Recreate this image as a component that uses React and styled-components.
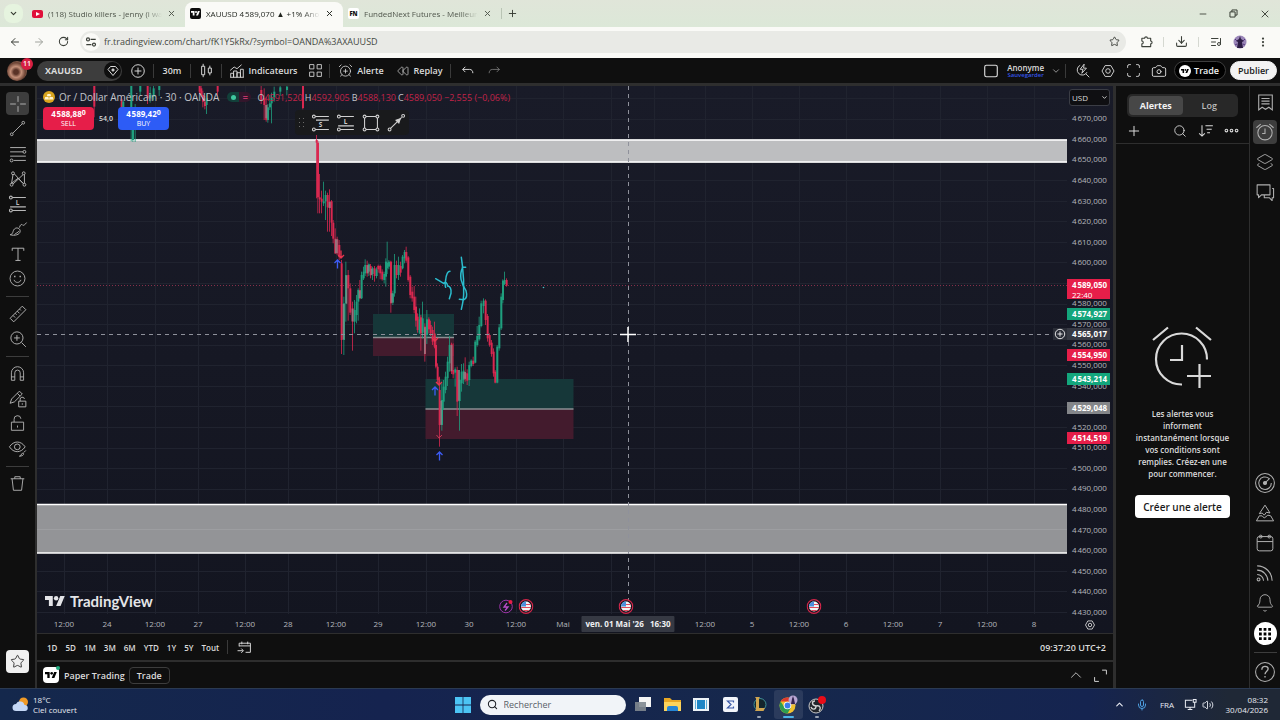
import React from 'react'
import styled, { createGlobalStyle, css } from 'styled-components'
import {
  AlarmClockPlus,
  ArrowLeft,
  ArrowRight,
  Bell,
  Camera,
  ChevronDown,
  ChevronUp,
  Download,
  EllipsisVertical,
  Layers2,
  ListMusic,
  Mic,
  Minus,
  Plus,
  Rewind,
  RotateCw,
  Search,
  Star,
  Volume2,
  X,
} from 'lucide-react'

/* ---------- data ---------- */

const PRICE_TOP = 4670
const PRICES = Array.from({ length: 25 }, (_, i) => PRICE_TOP - i * 10)
// the axis runs from half a step above the first price to half a step below the last
const priceToPercent = price => ((PRICE_TOP + 5 - price) / 250) * 100

const TIMES = [
  [64, '12:00'], [107, '24'], [155, '12:00'], [198, '27'], [245, '12:00'], [288, '28'],
  [336, '12:00'], [378, '29'], [426, '12:00'], [469, '30'], [516, '12:00'], [563, 'Mai'],
  [611, ''], [654, ''], [705, '12:00'], [752, '5'], [799, '12:00'], [846, '6'],
  [893, '12:00'], [940, '7'], [987, '12:00'], [1034, '8'],
]
const PLOT_X = 37
const PLOT_W = 1030
const timeToPercent = x => ((x - PLOT_X) / PLOT_W) * 100

const PRICE_TAGS = [
  { price: 4574.927, label: '4\u200A574,927', color: '#13a67c' },
  { price: 4554.95, label: '4\u200A554,950', color: '#e61e49' },
  { price: 4543.214, label: '4\u200A543,214', color: '#13a67c' },
  { price: 4529.048, label: '4\u200A529,048', color: '#84868a' },
  { price: 4514.519, label: '4\u200A514,519', color: '#e61e49' },
]

// x, open, close, high, low (y grows downwards)
const CANDLES = [
  [-536, -392, -365, -400, -350], [-531, -365, -385, -390, -352], [-618, -432, -370, -435, -338],
  [-507, -300, -432, -435, -266], [-502, -270, -335, -350, -264], [-495, -335, -365, -378, -264],
  [-480, -415, -432, -435, -403], [-458, -433, -395, -435, -378], [-450, -395, -410, -430, -382],
  [-440, -400, -425, -434, -388], [-423, -420, -433, -435, -402], [-302, -433, -415, -435, -408],
  [-297, -425, -405, -433, -398], [-292, -405, -385, -418, -368], [-286, -385, -372, -402, -362],
  [-281, -375, -395, -410, -348], [-248, -434, -415, -434, -402], [-117, -420, -390, -432, -378],
  [-108, -395, -375, -425, -330], [-102, -375, -330, -400, -325], [-97, -330, -368, -378, -322],
  [-91, -368, -380, -405, -360], [-86, -380, -398, -412, -320], [-78, -398, -415, -430, -385],
  [-60, -415, -428, -434, -402], [-40, -420, -430, -434, -404], [8, -432, -366, -435, -362],
  [49, -270, -262, -290, -95], [53, -262, -98, -268, -50], [58, -98, -92, -168, -50],
  [64, -94, -85, -118, -50], [70, -80, -86, -145, -72], [76, -86, -105, -118, -30],
  [82, -105, -68, -112, 5], [88, -86, -66, -122, 5], [94, -86, -22, -90, 18],
  [99, -22, 26, -30, 40], [105, 26, 70, -5, 72], [111, 28, 70, 20, 75], [117, 45, 80, 30, 90],
  [124, 100, 330, 90, 372], [131, 330, 220, 200, 375], [137, 220, 135, 95, 275],
  [144, 135, 175, 120, 272], [150, 175, 248, 160, 255], [157, 235, 275, 215, 362],
  [163, 275, 240, 210, 310], [169, 255, 215, 195, 280], [174, 215, 180, 175, 272],
  [179, 180, 205, 150, 208], [184, 205, 135, 125, 207], [190, 145, 125, 110, 150],
  [195, 130, 105, 88, 138], [201, 105, 130, 92, 140], [206, 125, 103, 100, 138],
  [211, 108, 135, 102, 145], [217, 132, 115, 110, 150], [223, 115, 138, 108, 155],
  [229, 138, 118, 112, 145], [234, 108, 118, 104, 128], [240, 108, 130, 104, 148],
  [246, 125, 148, 118, 152], [252, 150, 132, 125, 160], [257, 140, 95, 85, 170],
  [261, 115, 98, 35, 132], [266, 110, 95, 90, 118], [272, 95, 220, 92, 248],
  [278, 218, 190, 182, 225], [283, 190, 105, 72, 200], [289, 105, 135, 92, 145],
  [295, 135, 105, 80, 150], [301, 108, 128, 95, 140], [307, 115, 80, 75, 118],
  [313, 85, 66, 60, 100], [318, 66, 92, 50, 98], [324, 82, 150, 78, 155],
  [330, 140, 195, 135, 205], [336, 185, 205, 170, 215], [342, 200, 240, 168, 250],
  [347, 230, 272, 200, 290], [352, 260, 300, 250, 308], [358, 308, 268, 235, 312],
  [362, 262, 310, 255, 362], [367, 308, 265, 215, 325], [374, 290, 372, 280, 395],
  [380, 315, 268, 240, 342], [386, 268, 298, 262, 310], [391, 285, 310, 272, 318],
  [397, 300, 335, 290, 345], [403, 320, 350, 275, 355], [407, 345, 410, 330, 415],
  [412, 410, 450, 400, 460], [418, 480, 585, 440, 650], [425, 585, 510, 460, 602],
  [430, 515, 470, 450, 540], [436, 480, 440, 425, 490], [442, 445, 395, 380, 468],
  [448, 400, 345, 318, 425], [454, 343, 425, 338, 432], [459, 420, 433, 340, 445],
  [465, 428, 418, 412, 470], [471, 420, 515, 410, 558], [478, 513, 450, 420, 602],
  [484, 460, 425, 402, 485], [490, 450, 422, 400, 462], [495, 428, 448, 382, 455],
  [501, 430, 452, 418, 465], [507, 450, 405, 395, 468], [513, 408, 392, 388, 412],
  [519, 392, 402, 380, 408], [525, 398, 335, 330, 400], [531, 345, 318, 288, 350],
  [537, 328, 285, 260, 332], [543, 288, 220, 212, 292], [550, 228, 212, 205, 250],
  [556, 212, 270, 208, 285], [562, 258, 325, 252, 335], [568, 315, 345, 310, 350],
  [574, 338, 372, 330, 380], [580, 365, 430, 355, 440], [585, 425, 458, 420, 460],
  [591, 458, 350, 345, 460], [597, 355, 292, 282, 362], [603, 295, 200, 190, 300],
  [608, 210, 152, 148, 220], [613, 162, 150, 125, 165], [619, 150, 167, 145, 170],
]

const RANGES = ['1D', '5D', '1M', '3M', '6M', 'YTD', '1Y', '5Y', 'Tout']

/* ---------- shared ---------- */

const GlobalStyle = createGlobalStyle`
  * { box-sizing: border-box; }
  body {
    margin: 0;
    background: #0f0f0f;
    font-family: 'Open Sans', 'Noto Sans', sans-serif;
    font-size: 9px;
    color: #dbdbdb;
  }
  button, input, select { font: inherit; color: inherit; }
  button { border: 0; padding: 0; background: none; }
  svg { display: block; flex: none; }
`

const center = css`
  display: flex;
  align-items: center;
  justify-content: center;
`

const IconButton = styled.button`
  ${center}
  flex: none;
  width: ${p => p.$w || 24}px;
  height: ${p => p.$h || 24}px;
  border-radius: 4px;
  background: ${p => (p.$active ? '#3d3d3d' : 'transparent')};
`

const Line = ({ size = 18, w = 1.3, children }) => (
  <svg
    width={size}
    height={size}
    viewBox="0 0 28 28"
    fill="none"
    stroke="currentColor"
    strokeWidth={w}
    aria-hidden="true"
  >
    {children}
  </svg>
)

const TvMark = ({ width }) => (
  <svg width={width} height={width / 2} viewBox="0 0 36 18" fill="currentColor" aria-hidden="true">
    <path d="M14 18H7V7H0V0h14v18zM28 18h-8L27.5 0h8L28 18z" />
    <circle cx="20" cy="4" r="4" />
  </svg>
)

/* ---------- page ---------- */

const Page = styled.div`
  display: flex;
  flex-direction: column;
  min-height: 100vh;
`

const TabStrip = styled.div`
  display: flex;
  align-items: center;
  height: 27px;
  padding-left: 4px;
  background: linear-gradient(#e0e5d9, #dce8d8);
  color: #33382f;
`

const TabMenu = styled(IconButton)`
  border-radius: 8px;
  background: #e6f4df;
  margin-right: 4px;
`

const Tab = styled.div`
  display: flex;
  align-items: center;
  gap: 5px;
  width: 158px;
  height: 27px;
  padding: 0 9px 0 5px;
  margin-top: ${p => (p.$active ? '4px' : 0)};
  padding-bottom: ${p => (p.$active ? '4px' : 0)};
  border-radius: 8px 8px 0 0;
  background: ${p => (p.$active ? '#fafaf7' : 'transparent')};
  color: ${p => (p.$active ? '#1f231d' : '#50564c')};
`

const TabTitle = styled.span`
  flex: 1;
  overflow: hidden;
  font-size: 8px;
  font-weight: 500;
  white-space: nowrap;
  mask-image: linear-gradient(to right, #000 85%, transparent);
`

const Favicon = styled.span`
  ${center}
  flex: none;
  width: 11px;
  height: ${p => p.$h || 11}px;
  border-radius: 2px;
  background: ${p => p.$bg};
  color: ${p => p.$color || '#fff'};
  font-size: 6px;
  font-weight: 800;
`

const Divider = styled.span`
  flex: none;
  width: 1px;
  height: ${p => p.$h || 14}px;
  margin: 0 ${p => p.$gap || 0}px;
  background: ${p => p.$color || '#3a3a3a'};
`

const Push = styled.span`
  flex: 1;
`

const AddressRow = styled.div`
  display: flex;
  align-items: center;
  height: 31px;
  padding: 0 6px 2px 3px;
  background: #fafaf7;
  color: #3c403a;
`

const AddressBox = styled.label`
  flex: 1;
  display: flex;
  align-items: center;
  gap: 4px;
  height: 22px;
  margin: 0 8px 0 5px;
  padding: 0 6px 0 2px;
  border-radius: 11px;
  background: #e9eae6;
`

const SiteInfo = styled.span`
  ${center}
  width: 18px;
  height: 18px;
  border-radius: 9px;
  background: #fafaf7;
`

const AddressInput = styled.input`
  flex: 1;
  min-width: 0;
  padding: 0;
  border: 0;
  outline: 0;
  background: none;
  color: #454943;
`

const TopBar = styled.header`
  display: flex;
  align-items: center;
  height: 25px;
  padding: 0 3px 0 7px;
  background: #0f0f0f;
  font-weight: 600;
`

const Avatar = styled.div`
  position: relative;
  width: 20px;
  height: 20px;
  margin-right: 10px;
  border-radius: 50%;
  background: radial-gradient(circle at 45% 55%, #5a3327 15%, #c49079 35%, #6b4334 60%, #d8b09a);
`

const AvatarCount = styled.span`
  ${center}
  position: absolute;
  top: -3px;
  right: -6px;
  width: 12px;
  height: 12px;
  border-radius: 6px;
  background: #d61f42;
  color: #fff;
  font-size: 7px;
`

const SymbolButton = styled.button`
  display: flex;
  align-items: center;
  justify-content: space-between;
  width: 85px;
  height: 20px;
  padding: 0 1px 0 8px;
  border-radius: 10px;
  background: #3d3d3d;
  font-weight: 700;
`

const SymbolBadge = styled.span`
  ${center}
  width: 17px;
  height: 17px;
  border-radius: 9px;
  background: #0f0f0f;
`

const TextButton = styled.button`
  ${center}
  gap: 4px;
  height: 22px;
  width: ${p => p.$w}px;
  font-weight: 600;
`

const LayoutName = styled.button`
  display: flex;
  flex-direction: column;
  align-items: center;
  margin: 0 7px 0 8px;
  font-size: 8px;
  line-height: 9px;
  font-weight: 600;
`

const SaveHint = styled.span`
  color: #3555e8;
  font-size: 6px;
  line-height: 7px;
`

const Pill = styled.button`
  ${center}
  gap: 3px;
  height: 19px;
  padding: 0 6px 0 4px;
  margin-left: 3px;
  border: 1px solid #3d3d3d;
  border-radius: 10px;
  background: #000;
  color: #f2f2f2;
  font-weight: 600;
  ${p => p.$light && css`
    padding: 0 7px;
    margin-left: 4px;
    border-color: #f2f2f2;
    background: #f2f2f2;
    color: #191919;
  `}
`

const PillMark = styled.span`
  ${center}
  width: 12px;
  height: 12px;
  border-radius: 6px;
  background: #fff;
  color: #000;
`

const Workspace = styled.main`
  flex: 1;
  display: flex;
  gap: 2px;
  padding-top: 3px;
  background: #2e2e2e;
`

const DrawBar = styled.nav`
  display: flex;
  flex-direction: column;
  align-items: center;
  width: 35px;
  padding: 5px 0 14px;
  background: #0f0f0f;
  color: #b8b8b8;
`

const DrawButton = styled(IconButton)`
  width: 23px;
  height: 23px;
  margin: 1px 0;
  ${p => p.$light && css`
    background: #f0f0f0;
    color: #1a1a1a;
  `}
`

const BarRule = styled.hr`
  width: 23px;
  height: 1px;
  margin: ${p => p.$gap || 5}px 0 4px;
  border: 0;
  background: #3d3d3d;
`

const Middle = styled.section`
  flex: 1;
  min-width: 0;
  display: flex;
  flex-direction: column;
  gap: 2px;
`

const ChartPanel = styled.div`
  flex: 1;
  display: flex;
  flex-direction: column;
`

const ChartGrid = styled.div`
  flex: 1;
  display: grid;
  grid-template-columns: 1fr 46px;
  background: linear-gradient(#191b28, #131520);
`

const PlotColumn = styled.div`
  display: flex;
  flex-direction: column;
  min-width: 0;
`

const Plot = styled.div`
  position: relative;
  flex: 1;
  display: flex;
  flex-direction: column;
  padding: 4px 5px;
  overflow: hidden;
`

const PlotSvg = styled.svg`
  position: absolute;
  inset: 0;
  width: 100%;
  height: 100%;
`

const Legend = styled.div`
  position: relative;
  display: flex;
  align-items: center;
  height: 14px;
  white-space: nowrap;
  color: #c3c5cb;
`

const LegendTitle = styled.span`
  margin: 0 8px 0 3px;
  font-size: 10px;
`

const StatusPills = styled.span`
  display: flex;
  margin-right: 6px;
  border-radius: 5px;
  overflow: hidden;
`

const StatusPill = styled.span`
  ${center}
  width: 12px;
  height: 10px;
  background: ${p => p.$bg};
  color: ${p => p.$color};
  font-weight: 700;
`

const Dot = styled.span`
  width: 5px;
  height: 5px;
  border-radius: 50%;
  background: currentColor;
`

const Ohlc = styled.span`
  margin-right: 2px;
  color: #c22348;

  b {
    color: #c3c5cb;
    font-weight: 400;
  }
`

const Deals = styled.div`
  position: relative;
  display: flex;
  align-items: center;
  margin: 3px 0 0 1px;
`

const DealButton = styled.button`
  display: flex;
  flex-direction: column;
  align-items: center;
  width: 51px;
  height: 23px;
  padding-top: 2px;
  border-radius: 4px;
  background: ${p => p.$bg};
  color: #fff;
  font-size: 7px;
  line-height: 9px;

  b {
    font-size: 8px;
    line-height: 10px;
  }
  sup {
    font-size: 7px;
    line-height: 1px;
    vertical-align: 2px;
  }
`

const Spread = styled.span`
  width: 24px;
  text-align: center;
  font-size: 7px;
  font-weight: 600;
`

const Favorites = styled.div`
  position: absolute;
  left: 25%;
  top: 24px;
  display: flex;
  align-items: center;
  height: 25px;
  border-radius: 4px;
  background: #191a1c;
  color: #d0d0d0;
`

const Watermark = styled.div`
  position: relative;
  display: flex;
  align-items: center;
  gap: 5px;
  margin: auto 0 0 3px;
  color: #e4e5e8;
  font-family: Lato, 'Open Sans', sans-serif;
  font-size: 15px;
  line-height: 18px;
  font-weight: 700;
`

const EventMark = styled.span`
  position: absolute;
  bottom: 0;
  left: ${p => p.$left}%;
  transform: translateX(-50%);
`

const TimeAxis = styled.div`
  position: relative;
  height: 19px;
  font-size: 8px;
  line-height: 20px;
  color: #b4b6bd;
`

const TimeLabel = styled.span`
  position: absolute;
  transform: translateX(-50%);
`

const CrossTime = styled.span`
  position: absolute;
  top: 2px;
  transform: translateX(-50%);
  padding: 0 4px;
  border-radius: 1px;
  background: #363943;
  color: #f0f0f2;
  font-weight: 700;
  line-height: 16px;
  white-space: pre;
`

const PriceAxis = styled.div`
  display: flex;
  flex-direction: column;
`

const CurrencyBox = styled.div`
  position: relative;
  width: 41px;
  height: 17px;
  margin: 3px 0 2px 2px;

  select {
    width: 100%;
    height: 100%;
    padding: 0 2px;
    border: 1px solid #3b3d45;
    border-radius: 3px;
    background: #0f0f12;
    font-size: 8px;
    appearance: none;
  }
  svg {
    position: absolute;
    right: 2px;
    top: 5px;
    pointer-events: none;
  }
`

const PriceScale = styled.div`
  position: relative;
  flex: 1;
  display: flex;
  flex-direction: column;
  font-size: 8px;
  line-height: 12px;
  color: #b4b6bd;
`

const PriceLabel = styled.span`
  flex: 1;
  display: flex;
  align-items: center;
  padding-left: 5px;
`

const PriceTag = styled.span`
  position: absolute;
  left: 0;
  width: 43px;
  padding-left: 5px;
  transform: translateY(-6px);
  background: ${p => p.$bg};
  color: #fff;
  font-weight: 700;
  line-height: 12px;
`

const Countdown = styled.span`
  display: block;
  font-weight: 400;
  line-height: 8px;
`

const CrossPlus = styled.span`
  ${center}
  position: absolute;
  right: 100%;
  top: 0;
  width: 14px;
  height: 12px;
  background: #2a2d37;
`

const AxisSettings = styled(IconButton)`
  width: 46px;
  height: 11px;
  padding-bottom: 5px;
`

const Strip = styled.div`
  display: flex;
  align-items: center;
  height: 26px;
  padding: 0 1px 0 6px;
  background: #0f0f0f;
  font-weight: 600;
`

const RangeStrip = styled(Strip)`
  height: 27px;
  padding-right: 7px;
  border-top: 1px solid #2e2e2e;
  font-size: 8px;
`

const RangeButton = styled.button`
  padding: 0 4px;
  font-weight: 600;
`

const Clock = styled.span`
  font-size: 9px;
`

const BrokerMark = styled.span`
  ${center}
  position: relative;
  width: 16px;
  height: 16px;
  margin-right: 5px;
  border-radius: 4px;
  background: #fff;
  color: #000;
`

const OnlineDot = styled.span`
  position: absolute;
  top: -1px;
  right: -1px;
  width: 4px;
  height: 4px;
  border-radius: 50%;
  background: #22ab7f;
`

const OutlineButton = styled.button`
  height: 17px;
  padding: 0 7px;
  margin-left: 4px;
  border: 1px solid #3d3d3d;
  border-radius: 4px;
  font-weight: 600;
`

const AlertsPanel = styled.aside`
  display: flex;
  flex-direction: column;
  width: 134px;
  margin-left: 1px;
  border-right: 1px solid #2e2e2e;
  background: #0f0f0f;
`

const Segments = styled.div`
  display: flex;
  height: 23px;
  margin: 8px 11px 2px;
  padding: 2px;
  border-radius: 5px;
  background: #282828;
`

const Segment = styled.button`
  flex: 1;
  border-radius: 4px;
  background: ${p => (p.$active ? '#474747' : 'transparent')};
  color: ${p => (p.$active ? '#f2f2f2' : '#bdbdbd')};
  font-weight: ${p => (p.$active ? 700 : 600)};
`

const AlertTools = styled.div`
  display: flex;
  align-items: center;
  height: 25px;
  padding: 0 6px 1px;
  border-bottom: 1px solid #2e2e2e;
`

const EmptyState = styled.div`
  flex: 1;
  ${center}
  flex-direction: column;
  padding: 12px 16px 0;
  text-align: center;
`

const EmptyText = styled.p`
  margin: 20px 0 15px;
  font-size: 8px;
  font-weight: 600;
  line-height: 12px;
`

const CreateButton = styled.button`
  height: 23px;
  padding: 0 8px;
  border-radius: 4px;
  background: #fff;
  color: #1a1a1a;
  font-size: 10px;
  font-weight: 600;
  white-space: nowrap;
`

const WidgetBar = styled.nav`
  display: flex;
  flex-direction: column;
  align-items: center;
  width: 30px;
  margin-left: -2px;
  padding: 1px 0;
  background: #0f0f0f;
  color: #b0b0b0;
`

const WidgetButton = styled(IconButton)`
  margin: 3px 0;
`

const AppsButton = styled(IconButton)`
  width: 23px;
  height: 23px;
  margin: 4px 0;
  border-radius: 12px;
  background: #fff;
  color: #000;
`

const TaskBar = styled.footer`
  display: grid;
  grid-template-columns: 1fr auto 1fr;
  align-items: center;
  height: 32px;
  padding: 0 12px;
  border-top: 1px solid #2b3a52;
  background: linear-gradient(90deg, #14284c, #15234f 30%, #16284c 60%, #152450 85%, #1f2836 96%);
  color: #e8ebf2;
  font-size: 8px;
`

const Weather = styled.div`
  display: flex;
  align-items: center;
  gap: 4px;
  line-height: 10px;
`

const Apps = styled.div`
  display: flex;
  align-items: center;
`

const AppButton = styled.button`
  position: relative;
  ${center}
  width: 29px;
  height: 29px;
  border-radius: 3px;
  background: ${p => (p.$active ? 'rgba(255, 255, 255, 0.09)' : 'none')};

  &::after {
    content: '';
    position: absolute;
    bottom: 1px;
    width: ${p => (p.$active ? 11 : 4)}px;
    height: 2px;
    border-radius: 1px;
    background: ${p => (p.$active ? '#4cb4e8' : '#9aa3b2')};
    display: ${p => (p.$running ? 'block' : 'none')};
  }
`

const TaskSearch = styled.label`
  display: flex;
  align-items: center;
  gap: 6px;
  width: 146px;
  height: 20px;
  margin: 0 3px 0 2px;
  padding: 0 7px;
  border-radius: 10px;
  background: #f1f4f8;
  color: #1d2026;

  input {
    width: 100px;
    padding: 0;
    border: 0;
    outline: 0;
    background: none;
    font-size: 9px;
  }
  input::placeholder {
    color: #5a5f68;
    opacity: 1;
  }
`

const Tray = styled.div`
  display: flex;
  align-items: center;
  justify-content: flex-end;
`

const TrayClock = styled.div`
  margin-left: 10px;
  text-align: right;
  line-height: 10px;
`

/* ---------- drawings ---------- */

const Flag = () => (
  <svg width="15" height="15" viewBox="0 0 15 15" aria-hidden="true">
    <circle cx="7.5" cy="7.5" r="6.8" fill="#15171f" stroke="#d3264a" strokeWidth="1.2" />
    <clipPath id="flag">
      <circle cx="7.5" cy="7.5" r="5" />
    </clipPath>
    <g clipPath="url(#flag)">
      <path fill="#f3f3f5" d="M2 2h11v11H2z" />
      <path stroke="#e0485c" d="M2 5.5h11M2 8.5h11M2 11.5h11" strokeWidth="1.2" />
      <path fill="#4a90dc" d="M2 2h5.5v5.5H2z" />
    </g>
  </svg>
)

const Arrow = ({ x, y, down }) => (
  <path
    d={down ? 'M0-4.5V3M-3 0L0 3L3 0' : 'M0 4.5V-4M-3-1L0-4L3-1'}
    transform={`translate(${x} ${y})`}
    fill="none"
    stroke={down ? '#e8344e' : '#3c5cf5'}
    strokeWidth="1.3"
  />
)

const Chart = () => (
  <PlotSvg viewBox="37 86 1030 528" preserveAspectRatio="none" aria-label="XAUUSD">
    <g stroke="#20232f">
      {TIMES.map(([x]) => <path key={x} d={`M${x}.5 86V614`} />)}
      {[...Array(26)].map((_, i) => <path key={i} d={`M37 ${Math.round(98 + i * 20.56)}.5H1067`} />)}
    </g>
    <path d="M37 139.5H1067V162.5H37z" fill="#bdbec0" />
    <path d="M37 140H1067M37 162H1067" stroke="#fff" strokeWidth="1.5" />
    <path d="M37 504.5H1067V553H37z" fill="#939497" />
    <path d="M37 504.5H1067M37 553H1067" stroke="#fff" strokeWidth="1.5" />
    <path d="M37 529.5H1067" stroke="#9d9ea1" />

    <path d="M373 314H454V337H373zM425.5 379H573.5V409H425.5z" fill="#163739" />
    <path d="M373 337H454V356H373zM425.5 409H573.5V439H425.5z" fill="#431b2d" />
    <path d="M373 337.5H454M425.5 409H573.5" stroke="#8b8f92" strokeWidth="1.3" />
    <path d="M37 285.5H1067" stroke="#86304a" strokeDasharray="1 2" />

    <g transform="translate(300 230) scale(.33333)">
      {CANDLES.map(([x, open, close, high, low]) => {
        const color = close < open ? '#1f9f7e' : '#d92850'
        return (
          <g key={x} fill={color}>
            <rect x={x - 1} y={high} width="3" height={low - high} opacity=".8" />
            <rect x={x - 2} y={Math.min(open, close)} width="6" height={Math.max(3, Math.abs(open - close))} />
          </g>
        )
      })}
      <g fill="#8c8487" opacity=".8">
        <path d="M-104-375h6v40h-6zM86-84h6v18h-6zM105 28h8v42h-8zM128 222h5v106h-5zM155 236h5v38h-5z" />
        <path d="M137 137h5v84h-5zM176 182h6v22h-6zM201 106h5v24h-5zM212 116h5v20h-5zM372 292h5v80h-5z" />
        <path d="M421 512h5v72h-5zM452 345h5v78h-5zM474 420h5v92h-5zM490 426h8v20h-8zM272 190h6v28h-6z" />
      </g>
      <g fill="none" stroke="#2bbccd" strokeWidth="4.5" strokeLinecap="round">
        <path d="M407 146L431 160M450 124Q440 124 437 150Q434 166 437 172" />
        <path d="M431 160Q440 152 443 168Q455 170 453 190L448 206" />
        <path d="M484 82L488 112Q480 128 483 148Q488 168 498 182Q504 204 492 209L478 208" />
        <path d="M487 112H497M488 116Q492 150 491 184Q492 206 484 238" />
      </g>
    </g>

    <Arrow x={341} y={255} down />
    <Arrow x={337.5} y={264} />
    <Arrow x={435} y={338} down />
    <Arrow x={439} y={382} down />
    <Arrow x={435} y={391} />
    <Arrow x={439.5} y={456} />
    <path d="M436.5 435L439 438L442 435" fill="none" stroke="#c23a56" />
    <circle cx="543.5" cy="287.5" r=".8" fill="#4fb9c4" />

    <path d="M628.5 86V614M37 334.5H1054" stroke="#8f919b" strokeDasharray="4 4" />
    <path d="M628 327V342M620 334.5H636" stroke="#fff" strokeWidth="1.5" />
  </PlotSvg>
)

const nodes = pts => pts.map(([x, y]) => <circle key={`${x}-${y}`} cx={x} cy={y} r="2" />)

const HexIcon = ({ size = 16, w = 1.6 }) => (
  <Line size={size} w={w}>
    <path d="M9 4.5h10l5.5 9.5L19 23.5H9L3.5 14z" strokeLinejoin="round" />
    <circle cx="14" cy="14" r="4" />
  </Line>
)

const PositionIcon = ({ short }) => (
  <Line size={20} w={1.5}>
    <path d={short ? 'M6 5h19M7 10h18M6 23h19' : 'M6 5h19M3 18h22M6 23h19'} />
    {nodes([[4, 5], [4, 23]])}
    <text x="11" y={short ? 20 : 15} fontSize="9" fontWeight="700" fill="currentColor" stroke="none">
      {short ? 'S' : 'L'}
    </text>
  </Line>
)

const drawTools = [
  ['Curseur', <Line key="i" size={20}><path d="M14 3v8M14 17v8M3 14h8M17 14h8" /></Line>],
  ['Ligne de tendance', <Line key="i" size={19}><path d="M7 21L21 7" />{nodes([[5.5, 22.5], [22.5, 5.5]])}</Line>],
  ['Fibonacci', <Line key="i" size={20}><path d="M3 5h22M3 11h18M3 17h22M8 23h17" />{nodes([[23, 11], [5, 23]])}</Line>],
  ['Figures', <Line key="i" size={20}><path d="M5 20L7 8M9 7l12 13M7 21L21 8M23 8v12M5 20l9-7 8 8" />{nodes([[5, 22], [7, 6], [22, 6], [23, 22]])}</Line>],
  ['Position', <PositionIcon key="i" />],
  ['Pinceau', <Line key="i" size={20}><path d="M3 22c5-1 3-5 6-8 3-3 8-1 8 3 0 5-8 7-14 5zM16 12c1-4 3-5 4-4 1 2 4 0 6-3M9 22c2-3 5-2 6-5" /></Line>],
  ['Texte', <Line key="i" size={18} w={1.5}><path d="M5 9V5h18v4M14 5v19M10 24h8" /></Line>],
  ['Emojis', <Line key="i" size={19}><circle cx="14" cy="14" r="11" /><path d="M9 16c1 5 9 5 10 0" /><path d="M10 10v2M18 10v2" strokeWidth="2" /></Line>],
  null,
  ['Mesure', <Line key="i" size={20}><path d="M3 20L20 3l5 5L8 25zM7 16l3 3M10 13l2 2M13 10l3 3M16 7l2 2" /></Line>],
  ['Zoom', <Line key="i" size={20}><circle cx="12.5" cy="12.5" r="8.5" /><path d="M19 19l6 6M12.5 8.5v8M8.5 12.5h8" /></Line>],
  null,
  ['Aimant', <Line key="i" size={19}><path d="M5 24V13a9 9 0 0118 0v11h-5V13a4 4 0 00-8 0v11zM5 19h5M18 19h5" /></Line>],
  ['Rester en mode dessin', <Line key="i" size={20}><path d="M3 20l2-6L16 3l4 4L9 18zM13 6l4 4M15 17h10v8H15zM17 17v-2a3 3 0 016-1M20 20v2" /></Line>],
  ['Verrouiller', <Line key="i" size={19}><path d="M5 12h18v12H5zM9 12V8a5 5 0 0110-1M14 17v3" strokeLinejoin="round" /></Line>],
  ['Masquer', <Line key="i" size={20}><path d="M2 11c6-9 16-9 22 0-6 9-16 9-22 0z" /><circle cx="13" cy="11" r="4" /><path d="M16 24c3 0 2-3 4-4 3-1 3 4-4 4zM22 19l3-3" /></Line>],
  null,
  ['Supprimer', <Line key="i" size={19}><path d="M4 7h20M10 7V4h8v3M6 7l2 17h12l2-17" strokeLinejoin="round" /></Line>],
]

const AlarmDrawing = () => (
  <svg width="62" height="62" viewBox="0 0 62 62" fill="none" stroke="#d9d9d9" strokeWidth="2.2" aria-hidden="true">
    <path d="M55 33.5A25.5 25.5 0 1030 58.5" />
    <path d="M30 19v15H18M1 14L16 1.5M44 1.5L59 14M47.5 38v24M35 50h24" />
  </svg>
)

/* ---------- sections ---------- */

const Browser = () => (
  <>
    <TabStrip>
      <TabMenu $w={19} $h={19} aria-label="Rechercher dans les onglets"><ChevronDown size={9} strokeWidth={3} /></TabMenu>
      <Tab>
        <Favicon $bg="#e0103a" $h={8}>
          <svg width="4" height="4" viewBox="0 0 4 4"><path d="M0 0l4 2l-4 2z" fill="#fff" /></svg>
        </Favicon>
        <TabTitle>(118) Studio killers - jenny (i wa</TabTitle>
        <X size={9} strokeWidth={2.5} />
      </Tab>
      <Tab $active>
        <Favicon $bg="#0c0c0c"><TvMark width={9} /></Favicon>
        <TabTitle>XAUUSD 4{'\u200A'}589,070 ▲ +1% Ano</TabTitle>
        <X size={9} strokeWidth={2.5} />
      </Tab>
      <Tab>
        <Favicon $bg="#fff" $color="#111">FN</Favicon>
        <TabTitle>FundedNext Futures - Meilleure</TabTitle>
        <X size={9} strokeWidth={2.5} />
      </Tab>
      <Divider $h={11} $color="#b9c4b4" />
      <IconButton $w={20} aria-label="Nouvel onglet"><Plus size={11} /></IconButton>
      <Push />
      <IconButton $w={30} aria-label="Réduire"><Minus size={10} /></IconButton>
      <IconButton $w={31} aria-label="Restaurer">
        <Line size={9} w={3}><path d="M3 9h16v16H3zM9 9V3h16v16h-6" strokeLinejoin="round" /></Line>
      </IconButton>
      <IconButton $w={31} aria-label="Fermer"><X size={12} strokeWidth={1.8} /></IconButton>
    </TabStrip>
    <AddressRow>
      <IconButton aria-label="Retour"><ArrowLeft size={12} /></IconButton>
      <IconButton aria-label="Avancer"><ArrowRight size={12} color="#a0a39d" /></IconButton>
      <IconButton aria-label="Actualiser"><RotateCw size={11} strokeWidth={2.3} /></IconButton>
      <AddressBox>
        <SiteInfo>
          <Line size={12} w={2.8}>
            <circle cx="7" cy="8" r="3.5" /><path d="M13 8h12M3 20h12" /><circle cx="21" cy="20" r="3.5" />
          </Line>
        </SiteInfo>
        <AddressInput aria-label="Adresse" defaultValue="fr.tradingview.com/chart/fK1Y5kRx/?symbol=OANDA%3AXAUUSD" />
        <Star size={11} />
      </AddressBox>
      <IconButton aria-label="Extensions">
        <Line size={13} w={2.4}><path d="M4 7h6a3 3 0 016 0h7v6a3 3 0 010 6v6H4v-6a3 3 0 000-6z" strokeLinejoin="round" /></Line>
      </IconButton>
      <Divider $h={10} $gap={5} $color="#d5d8d1" />
      <IconButton aria-label="Téléchargements"><Download size={13} /></IconButton>
      <Divider $h={10} $gap={5} $color="#d5d8d1" />
      <IconButton aria-label="Médias"><ListMusic size={12} /></IconButton>
      <IconButton aria-label="Profil">
        <svg width="14" height="14" viewBox="0 0 14 14">
          <circle cx="7" cy="7" r="6.5" fill="#9a86b8" />
          <path d="M7 1l1 3 3 2-2 1 1 6H4l1-6-2-1 3-2z" fill="#2c1d45" />
          <path d="M2 4l2 2M12 4l-2 2M2 10l2-1M12 10l-2-1" stroke="#54387c" />
        </svg>
      </IconButton>
      <IconButton $w={22} aria-label="Menu"><EllipsisVertical size={12} strokeWidth={2.5} /></IconButton>
    </AddressRow>
  </>
)

const Header = () => (
  <TopBar>
    <Avatar><AvatarCount>11</AvatarCount></Avatar>
    <SymbolButton>
      XAUUSD
      <SymbolBadge>
        <Line size={14} w={2}><path d="M9 5h10l5 6-10 12L4 11z" strokeLinejoin="round" /><path d="M14 9v6M11 12h6" strokeWidth="3" /></Line>
      </SymbolBadge>
    </SymbolButton>
    <IconButton $w={31} aria-label="Comparer">
      <Line size={16} w={1.7}><circle cx="14" cy="14" r="11" /><path d="M14 8v12M8 14h12" /></Line>
    </IconButton>
    <Divider />
    <TextButton $w={36}>30m</TextButton>
    <Divider />
    <IconButton $w={30} aria-label="Bougies">
      <Line size={17} w={1.6}><path d="M6 7h5v14H6zM8.5 3v4M8.5 21v4M17 10h5v8h-5zM19.5 6v4M19.5 18v4" /></Line>
    </IconButton>
    <Divider />
    <TextButton $w={82}>
      <Line size={16} w={1.6}><path d="M3 25V18h5v7M8 25V14h6v11M14 25V17h6v8M20 25V11h5v14M2 25h24M2 13l7-6 5 3 8-7" /></Line>
      Indicateurs
    </TextButton>
    <IconButton $w={23} aria-label="Modèles">
      <Line size={15} w={1.6}><path d="M3 3h8v8H3zM17 3h8v8h-8zM3 17h8v8H3zM17 17h8v8h-8z" /></Line>
    </IconButton>
    <Divider $gap={2} />
    <TextButton $w={58}><AlarmClockPlus size={15} strokeWidth={1.3} />Alerte</TextButton>
    <TextButton $w={60}><Rewind size={12} strokeWidth={1.4} />Replay</TextButton>
    <Divider />
    <IconButton $w={32} aria-label="Annuler"><Line size={15} w={1.8}><path d="M10 7L5 12l5 5M5 12h13c4 0 6 3 6 7" /></Line></IconButton>
    <IconButton $w={22} aria-label="Rétablir"><Line size={15} w={1.6}><path opacity=".5" d="M18 7l5 5-5 5M23 12H10c-4 0-6 3-6 7" /></Line></IconButton>
    <Push />
    <Line size={16} w={2}><rect x="3" y="4" width="22" height="20" rx="3" /></Line>
    <LayoutName>Anonyme<SaveHint>Sauvegarder</SaveHint></LayoutName>
    <ChevronDown size={10} strokeWidth={1.5} />
    <Divider $gap={4} />
    <IconButton $w={25} aria-label="Recherche rapide">
      <Line size={16} w={1.6}><path d="M9 4a9 9 0 1012 12M19 19l6 6M16 2L9 11h5l-2 7 8-9h-5z" /></Line>
    </IconButton>
    <IconButton $w={26} aria-label="Paramètres"><HexIcon /></IconButton>
    <IconButton $w={25} aria-label="Plein écran">
      <Line size={15} w={1.8}><path d="M3 9V6a3 3 0 013-3h3M19 3h3a3 3 0 013 3v3M25 19v3a3 3 0 01-3 3h-3M9 25H6a3 3 0 01-3-3v-3" /></Line>
    </IconButton>
    <IconButton $w={25} aria-label="Capture"><Camera size={16} strokeWidth={1.4} /></IconButton>
    <Pill><PillMark><TvMark width={8} /></PillMark>Trade</Pill>
    <Pill $light>Publier</Pill>
  </TopBar>
)

const PlotPane = () => (
  <Plot>
    <Chart />
    <Legend>
      <svg width="14" height="14" viewBox="0 0 14 14" aria-hidden="true">
        <circle cx="7" cy="7" r="6" fill="#d9a51f" />
        <path d="M5.5 4h3l.7 2.2H4.8zM3.2 7h3.2l.6 2.5H2.5zM7.6 7h3.2l.7 2.5H7z" fill="#fff4cf" />
      </svg>
      <LegendTitle>Or / Dollar Américain · 30 · OANDA</LegendTitle>
      <StatusPills>
        <StatusPill $bg="#12403a" $color="#3fc9a0"><Dot /></StatusPill>
        <StatusPill $bg="#33162b" $color="#c2356a">=</StatusPill>
      </StatusPills>
      <Ohlc><b>O</b>4591,520</Ohlc>
      <Ohlc><b>H</b>4592,905</Ohlc>
      <Ohlc><b>B</b>4588,130</Ohlc>
      <Ohlc><b>C</b>4589,050</Ohlc>
      <Ohlc>−2,555 (−0,06%)</Ohlc>
    </Legend>
    <Deals>
      <DealButton $bg="#e61e49"><b>4{'\u200A'}588,88<sup>0</sup></b>SELL</DealButton>
      <Spread>54,0</Spread>
      <DealButton $bg="#2d5cf6"><b>4{'\u200A'}589,42<sup>0</sup></b>BUY</DealButton>
    </Deals>
    <Favorites>
      <IconButton $w={14} aria-label="Déplacer">
        <svg width="6" height="9" viewBox="0 0 6 9" fill="#6b6b6b"><path d="M0 0h1v1H0zM4 0h1v1H4zM0 4h1v1H0zM4 4h1v1H4zM0 8h1v1H0zM4 8h1v1H4z" /></svg>
      </IconButton>
      <IconButton $w={25} aria-label="Position vendeuse"><PositionIcon short /></IconButton>
      <IconButton $w={25} aria-label="Position acheteuse"><PositionIcon /></IconButton>
      <IconButton $w={25} aria-label="Rectangle">
        <Line size={20} w={1.5}><path d="M7 5h14M7 23h14M5 7v14M23 7v14" />{nodes([[5, 5], [23, 5], [5, 23], [23, 23]])}</Line>
      </IconButton>
      <IconButton $w={25} aria-label="Flèche">
        <Line size={20} w={1.5}><path d="M6 22L22 6" /><path d="M20 8l-6 2 4 4z" fill="currentColor" />{nodes([[5, 23], [24, 4]])}</Line>
      </IconButton>
    </Favorites>
    <Watermark><TvMark width={20} />TradingView</Watermark>
    <EventMark $left={timeToPercent(506)}>
      <svg width="15" height="15" viewBox="0 0 15 15" aria-hidden="true">
        <circle cx="7.5" cy="7.5" r="6.3" fill="#15171f" stroke="#9a35a8" />
        <path d="M8.5 4L5.5 8h4L6.5 11.5" fill="none" stroke="#b94cc8" strokeWidth="1.3" />
        <circle cx="12" cy="3" r="2" fill="#e61e49" />
      </svg>
    </EventMark>
    {[526, 626, 814].map(x => <EventMark key={x} $left={timeToPercent(x)}><Flag /></EventMark>)}
  </Plot>
)

const Prices = () => (
  <PriceAxis>
    <CurrencyBox>
      <select aria-label="Devise"><option>USD</option></select>
      <ChevronDown size={7} strokeWidth={3} />
    </CurrencyBox>
    <PriceScale>
      {PRICES.map(p => <PriceLabel key={p}>4{'\u200A'}{p - 4000},000</PriceLabel>)}
      {PRICE_TAGS.map(tag => (
        <PriceTag key={tag.price} $bg={tag.color} style={{ top: `${priceToPercent(tag.price)}%` }}>{tag.label}</PriceTag>
      ))}
      <PriceTag $bg="#e61e49" style={{ top: `${priceToPercent(4589.05)}%` }}>
        4{'\u200A'}589,050<Countdown>22:40</Countdown>
      </PriceTag>
      <PriceTag $bg="#363943" style={{ top: `${priceToPercent(4565.017)}%` }}>
        <CrossPlus>
          <Line size={12} w={2}><circle cx="14" cy="14" r="11" /><path d="M14 8v12M8 14h12" /></Line>
        </CrossPlus>
        4{'\u200A'}565,017
      </PriceTag>
    </PriceScale>
    <AxisSettings aria-label="Paramètres de l’échelle"><HexIcon size={12} w={2} /></AxisSettings>
  </PriceAxis>
)

const App = () => (
  <Page>
    <GlobalStyle />
    <Browser />
    <Header />
    <Workspace>
      <DrawBar aria-label="Outils de dessin">
        {drawTools.map((tool, i) => (tool
          ? <DrawButton key={tool[0]} $active={i === 0} aria-label={tool[0]}>{tool[1]}</DrawButton>
          : <BarRule key={i} />
        ))}
        <Push />
        <DrawButton $light aria-label="Favoris"><Star size={15} strokeWidth={1.3} /></DrawButton>
      </DrawBar>

      <Middle>
        <ChartPanel>
          <ChartGrid>
            <PlotColumn>
              <PlotPane />
              <TimeAxis>
                {TIMES.map(([x, label]) => (
                  <TimeLabel key={x} style={{ left: `${timeToPercent(x)}%` }}>{label}</TimeLabel>
                ))}
                <CrossTime style={{ left: `${timeToPercent(628)}%` }}>ven. 01 Mai '26   16:30</CrossTime>
              </TimeAxis>
            </PlotColumn>
            <Prices />
          </ChartGrid>
          <RangeStrip>
            {RANGES.map(r => <RangeButton key={r}>{r}</RangeButton>)}
            <Divider $gap={4} />
            <IconButton aria-label="Aller à la date">
              <Line size={15} w={1.8}><path d="M4 12V6h21v17h-9M4 11h21M9 3v5M20 3v5M1 20h10M8 16l4 4-4 4" /></Line>
            </IconButton>
            <Push />
            <Clock>09:37:20 UTC+2</Clock>
          </RangeStrip>
        </ChartPanel>
        <Strip>
          <BrokerMark><TvMark width={12} /><OnlineDot /></BrokerMark>
          Paper Trading
          <OutlineButton>Trade</OutlineButton>
          <Push />
          <IconButton aria-label="Ouvrir"><ChevronUp size={18} strokeWidth={1.1} /></IconButton>
          <IconButton aria-label="Agrandir"><Line size={15} w={1.8}><path d="M17 4h8v8M3 17v8h8" /></Line></IconButton>
        </Strip>
      </Middle>

      <AlertsPanel>
        <Segments>
          <Segment $active>Alertes</Segment>
          <Segment>Log</Segment>
        </Segments>
        <AlertTools>
          <IconButton aria-label="Ajouter"><Plus size={16} strokeWidth={1.5} /></IconButton>
          <Push />
          <IconButton aria-label="Rechercher"><Search size={14} strokeWidth={1.5} /></IconButton>
          <IconButton $w={27} aria-label="Trier">
            <Line size={16} w={1.8}><path d="M7 4v19M2 18l5 5 5-5M13 5h13M15 11h9M16 17h5" /></Line>
          </IconButton>
          <IconButton aria-label="Plus">
            <Line size={15} w={2}><circle cx="4.5" cy="14" r="2.5" /><circle cx="14" cy="14" r="2.5" /><circle cx="23.5" cy="14" r="2.5" /></Line>
          </IconButton>
        </AlertTools>
        <EmptyState>
          <AlarmDrawing />
          <EmptyText>Les alertes vous informent instantanément lorsque vos conditions sont remplies. Créez-en une pour commencer.</EmptyText>
          <CreateButton>Créer une alerte</CreateButton>
        </EmptyState>
      </AlertsPanel>

      <WidgetBar aria-label="Widgets">
        <WidgetButton aria-label="Liste">
          <Line size={19} w={1.6}><path d="M4 3h20v22l-5-4-5 3-5-3-5 4zM8 8h12M8 12h12M8 16h12" /></Line>
        </WidgetButton>
        <WidgetButton $active aria-label="Alertes">
          <Line size={20} w={1.5}><circle cx="14" cy="15" r="10" /><path d="M14 9v7h-4M2 8l6-5M20 3l6 5" /></Line>
        </WidgetButton>
        <WidgetButton aria-label="Calques"><Layers2 size={18} strokeWidth={1.2} /></WidgetButton>
        <WidgetButton aria-label="Discussions">
          <Line size={20} w={1.5}><path d="M3 4h18v14H9l-4 4v-4H3zM24 9h2v13h-2v4l-4-4h-7v-4" strokeLinejoin="round" /></Line>
        </WidgetButton>
        <Push />
        <WidgetButton aria-label="Screener">
          <Line size={22}><circle cx="14" cy="14" r="12" /><path d="M19 8a8 8 0 103 6M14 14l6-6" /><circle cx="14" cy="14" r="2" fill="currentColor" /></Line>
        </WidgetButton>
        <WidgetButton aria-label="Pine">
          <Line size={20} w={1.4}><path d="M14 3l7 11-5-1-3 4-3-3-4 1zM6 18l-4 7h24l-4-7-4-1-5 4-3-3z" strokeLinejoin="round" /></Line>
        </WidgetButton>
        <WidgetButton aria-label="Calendrier">
          <Line size={20} w={1.4}><rect x="3" y="5" width="22" height="20" rx="3" /><path d="M3 12h22" /><circle cx="8" cy="5" r="2" /><circle cx="20" cy="5" r="2" /></Line>
        </WidgetButton>
        <WidgetButton aria-label="Flux">
          <Line size={20} w={1.5}><path d="M3 4a21 21 0 0121 21M3 10a15 15 0 0115 15M3 16a9 9 0 019 9" /><circle cx="5" cy="23" r="2" /></Line>
        </WidgetButton>
        <WidgetButton aria-label="Notifications"><Bell size={20} strokeWidth={1.1} /></WidgetButton>
        <AppsButton aria-label="Produits">
          <svg width="12" height="12" viewBox="0 0 13 13"><path d="M0 0h3v3H0zM5 0h3v3H5zM10 0h3v3h-3zM0 5h3v3H0zM5 5h3v3H5zM10 5h3v3h-3zM0 10h3v3H0zM5 10h3v3H5zM10 10h3v3h-3z" /></svg>
        </AppsButton>
        <BarRule $gap={3} />
        <WidgetButton aria-label="Aide">
          <Line size={22}><circle cx="14" cy="14" r="12" /><path d="M10 11c0-6 8-5 8-1 0 3-4 3-4 7M14 19v2" strokeWidth="1.7" /></Line>
        </WidgetButton>
      </WidgetBar>
    </Workspace>

    <TaskBar>
      <Weather>
        <svg width="17" height="15" viewBox="0 0 17 15" aria-hidden="true">
          <circle cx="11.5" cy="5" r="4.5" fill="#f09a26" />
          <path d="M4 14a3.5 3.5 0 010-7 4.5 4.5 0 018.5 1A3 3 0 0113 14z" fill="#c5d8f6" />
        </svg>
        <div>18°C<br />Ciel couvert</div>
      </Weather>
      <Apps>
        <AppButton aria-label="Démarrer">
          <svg width="16" height="16" viewBox="0 0 16 16"><path d="M0 0h7.6v7.6H0zM8.4 0H16v7.6H8.4zM0 8.4h7.6V16H0zM8.4 8.4H16V16H8.4z" fill="#4cc4f4" /></svg>
        </AppButton>
        <TaskSearch>
          <Search size={11} strokeWidth={2.3} />
          <input placeholder="Rechercher" aria-label="Rechercher" />
        </TaskSearch>
        <AppButton aria-label="Bureaux">
          <svg width="16" height="15" viewBox="0 0 16 15"><path d="M4 0h12v10H4z" fill="#f4f4f4" /><path d="M0 5h11v9H0z" fill="#808890" opacity=".9" /></svg>
        </AppButton>
        <AppButton aria-label="Explorateur">
          <svg width="17" height="15" viewBox="0 0 17 15"><path d="M0 1h6l2 2h9v11H0z" fill="#e8a825" /><path d="M0 5h17v9H0z" fill="#fcd45c" /><path d="M3 14v-3q0-2 2-2h7q2 0 2 2v3z" fill="#2586d6" /></svg>
        </AppButton>
        <AppButton aria-label="Fenêtres">
          <svg width="16" height="13" viewBox="0 0 16 13"><path d="M0 0h16v13H0z" fill="#edf3f7" /><path d="M4 2h8v9H4z" fill="#1e86c6" /><path d="M2 2h1v9H2zM13 2h1v9h-1z" fill="#5fb0d8" /></svg>
        </AppButton>
        <AppButton aria-label="Calcul">
          <svg width="15" height="15" viewBox="0 0 15 15"><rect width="15" height="15" rx="2" fill="#f2f5fb" /><path d="M10.5 5.5V4H4.5L8 7.5l-3.5 3.5h6V9.5" fill="none" stroke="#3b5aa8" strokeWidth="1.2" /></svg>
        </AppButton>
        <AppButton $running aria-label="League of Legends">
          <svg width="15" height="15" viewBox="0 0 15 15"><circle cx="8" cy="7.5" r="6" fill="#14252c" stroke="#3f8f96" /><path d="M3 0h5l-1 1.5V11h6l-1.5 3H3l1-2V1.5z" fill="#cfa551" /></svg>
        </AppButton>
        <AppButton $active $running aria-label="Chrome">
          <svg width="19" height="19" viewBox="0 0 19 19">
            <circle cx="8.5" cy="10.5" r="8" fill="#f2c12e" />
            <path d="M1.6 6.5a8 8 0 0113.9 0h-7z" fill="#e0392d" />
            <path d="M1.6 6.5a8 8 0 006.9 12l3.5-6-7-1z" fill="#2f9e4f" />
            <circle cx="8.5" cy="10.5" r="3.8" fill="#fff" />
            <circle cx="8.5" cy="10.5" r="2.9" fill="#3b7de8" />
            <circle cx="14" cy="5" r="4.5" fill="#b9a6d2" />
            <path d="M14 1l1 3 1 5h-4l1-5z" fill="#35234f" />
          </svg>
        </AppButton>
        <AppButton $running aria-label="OBS">
          <svg width="18" height="18" viewBox="0 0 18 18">
            <circle cx="8" cy="10" r="7" fill="#22252b" stroke="#c9c9c9" />
            <path d="M8 10C3 9 4 5 7 5M8 10c5-1 5 3 3 5M8 10c0 4-4 4-5 1" fill="none" stroke="#d2d2d2" strokeWidth="1.4" />
            <circle cx="14" cy="4" r="4" fill="#e80c18" />
          </svg>
        </AppButton>
      </Apps>
      <Tray>
        <IconButton $w={22} aria-label="Icônes masquées"><ChevronUp size={11} strokeWidth={2.5} /></IconButton>
        <IconButton $w={22} aria-label="Micro"><Mic size={12} color="#4d9fe0" /></IconButton>
        <IconButton $w={29} aria-label="Langue">FRA</IconButton>
        <IconButton $w={18} aria-label="Réseau">
          <Line size={13} w={2.2}><path d="M18 5H3v15h20v-8M8 25h10M13 20v5M20 3h6v6h-6zM23 9v3" /></Line>
        </IconButton>
        <IconButton $w={16} aria-label="Volume"><Volume2 size={12} strokeWidth={1.8} /></IconButton>
        <TrayClock>08:32<br />30/04/2026</TrayClock>
      </Tray>
    </TaskBar>
  </Page>
)

export default App
